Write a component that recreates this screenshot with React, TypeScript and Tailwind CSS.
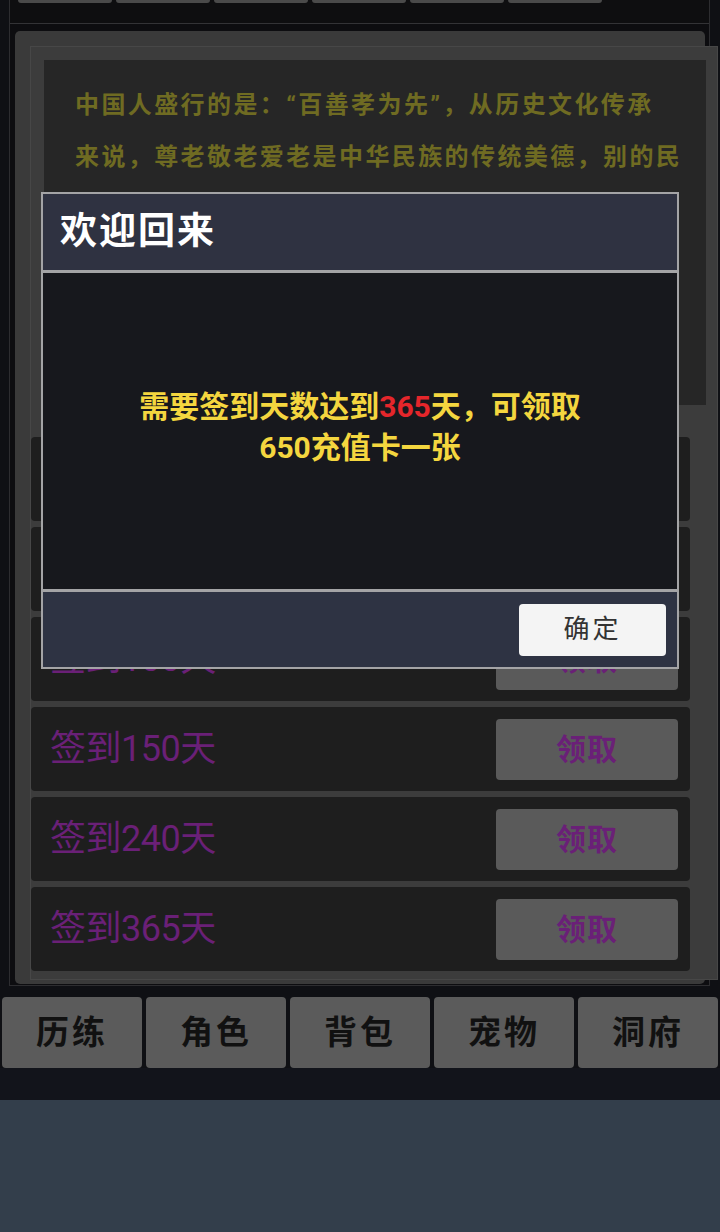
import React from "react";

const FONT = "Roboto, 'Noto Sans CJK SC', 'Noto Sans', sans-serif";

const rows = ["签到30天", "签到60天", "签到100天", "签到150天", "签到240天", "签到365天"];
const nav = ["历练", "角色", "背包", "宠物", "洞府"];
const story = [
  "中国人盛行的是：“百善孝为先”，从历史文化传承",
  "来说，尊老敬老爱老是中华民族的传统美德，别的民",
];

export default function App() {
  return (
    <div
      className="relative w-[720px] h-[1232px] overflow-hidden bg-[#0f1014] flex flex-col"
      style={{ fontFamily: FONT }}
    >
      {/* frame */}
      <div className="ml-[9px] w-[701px] h-[986px] border-x border-b border-[#2d2d30] bg-[#0d0d10] flex flex-col shrink-0">
        <div className="h-[24px] border-b border-[#333336] bg-[#0e0e10] flex gap-[4px] pl-[8px] shrink-0">
          {[0, 1, 2, 3, 4, 5].map((i) => (
            <div key={i} className="w-[94px] h-[3px] rounded-b-[3px] bg-[#4a4a4a]" />
          ))}
        </div>
        <div className="pt-[7px] pl-[5px]">
          {/* outer panel */}
          <div className="w-[690px] h-[953px] rounded-[5px] bg-[#3a3a3a] pt-[15px] pl-[15px]">
            {/* inner panel */}
            <div className="w-[688px] h-[934px] border border-[#474747] bg-[#3c3c3c] flex flex-col">
              <div className="ml-[13px] mt-[13px] w-[662px] h-[345px] bg-[#262626] pl-[31px] pt-[19px] overflow-hidden">
                {story.map((l, i) => (
                  <div
                    key={i}
                    className="whitespace-nowrap text-[24px] leading-[52px] tracking-[2.4px] font-bold text-[#6f6b22]"
                  >
                    {l}
                  </div>
                ))}
              </div>
              <div className="mt-[32px] flex flex-col gap-[6px]">
                {rows.map((r) => (
                  <div
                    key={r}
                    className="w-[659px] h-[84px] rounded-[4px] bg-[#1e1e1e] flex items-center justify-between pl-[19px] pr-[12px]"
                  >
                    <span className="text-[36px] text-[#6a2077] tracking-[-0.5px]">{r}</span>
                    <div className="w-[182px] h-[61px] rounded-[4px] bg-[#5a5a5a] flex items-center justify-center text-[30px] font-bold text-[#6a2077] tracking-[1px]">
                      领取
                    </div>
                  </div>
                ))}
              </div>
            </div>
          </div>
        </div>
      </div>

      {/* bottom nav */}
      <div className="mt-[11px] px-[2px] flex gap-[4px] shrink-0">
        {nav.map((n) => (
          <div
            key={n}
            className="w-[140px] h-[71px] rounded-[4px] bg-[#5b5b5b] flex items-center justify-center text-[33px] font-bold text-[#111111] tracking-[3px]"
          >
            {n}
          </div>
        ))}
      </div>
      <div className="h-[32px] bg-[#12141b] shrink-0" />
      <div className="flex-1 bg-[#333e4b]" />

      {/* modal */}
      <div className="absolute left-[41px] top-[192px] w-[638px] h-[477px] border-2 border-[#a4a4a6] bg-[#a4a4a6] flex flex-col gap-[3px]">
        <div className="h-[76px] bg-[#2f3241] flex items-center pl-[17px] shrink-0">
          <span className="text-[37px] font-bold text-white tracking-[2px]">欢迎回来</span>
        </div>
        <div className="flex-1 bg-[#17181d] flex flex-col items-center justify-center pb-[8px]">
          <div className="text-[30px] leading-[41px] font-bold text-[#f4d63f] text-center">
            需要签到天数达到<span className="text-[#e5262b]">365</span>天，可领取
          </div>
          <div className="text-[30px] leading-[41px] font-bold text-[#f4d63f] text-center">
            650充值卡一张
          </div>
        </div>
        <div className="h-[75px] bg-[#2e3343] flex items-center justify-end pr-[11px] shrink-0">
          <div className="w-[147px] h-[52px] rounded-[4px] bg-[#f4f4f4] flex items-center justify-center text-[26px] text-[#333333] tracking-[3px]">
            确定
          </div>
        </div>
      </div>
    </div>
  );
}
